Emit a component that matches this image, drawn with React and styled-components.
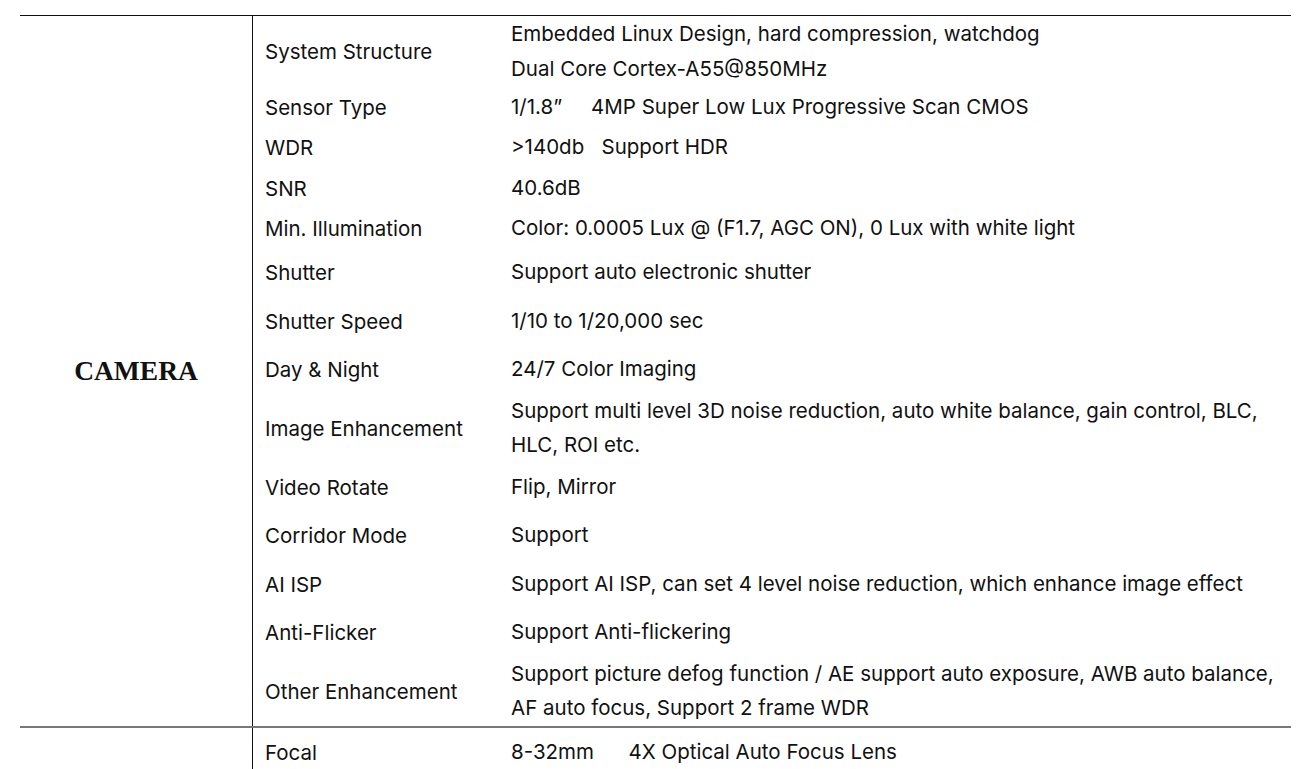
import React from "react";
import styled, { createGlobalStyle } from "styled-components";

const GlobalStyle = createGlobalStyle`
  html, body {
    margin: 0;
    padding: 0;
    background: #ffffff;
  }
  body {
    width: 1301px;
    height: 769px;
    overflow: hidden;
  }
`;

const Page = styled.div`
  padding: 15px 10px 0 20px;
  width: 1271px;
`;

const Section = styled.div`
  display: flex;
  border-top: ${(p) => (p.first ? "1px solid #111" : "2px solid #777")};
`;

const Category = styled.div`
  width: 232px;
  flex-shrink: 0;
  border-right: 1px solid #111;
  display: flex;
  align-items: center;
  justify-content: center;
  font-family: "Liberation Serif", "Times New Roman", serif;
  font-weight: bold;
  font-size: 27.5px;
  color: #111;
`;

const Rows = styled.div`
  flex: 1;
  display: flex;
  flex-direction: column;
`;

const Row = styled.div`
  display: grid;
  grid-template-columns: 246px 1fr;
  align-items: center;
  height: ${(p) => p.h}px;
  padding-left: 12px;
  font-family: "Inter", "Noto Sans", sans-serif;
  font-size: 20.5px;
  color: #111;
`;

const Label = styled.div`
  white-space: nowrap;
`;

const Value = styled.div`
  line-height: 34.5px;
  white-space: pre;
`;

const cameraRows = [
  ["System Structure", "Embedded Linux Design, hard compression, watchdog\nDual Core Cortex-A55@850MHz", 71],
  ["Sensor Type", "1/1.8\u201D     4MP Super Low Lux Progressive Scan CMOS", 40],
  ["WDR", ">140db   Support HDR", 41],
  ["SNR", "40.6dB", 40],
  ["Min. Illumination", "Color: 0.0005 Lux @ (F1.7, AGC ON), 0 Lux with white light", 40],
  ["Shutter", "Support auto electronic shutter", 49],
  ["Shutter Speed", "1/10 to 1/20,000 sec", 48],
  ["Day & Night", "24/7 Color Imaging", 48],
  ["Image Enhancement", "Support multi level 3D noise reduction, auto white balance, gain control, BLC,\nHLC, ROI etc.", 70],
  ["Video Rotate", "Flip, Mirror", 48],
  ["Corridor Mode", "Support", 49],
  ["AI ISP", "Support AI ISP, can set 4 level noise reduction, which enhance image effect", 48],
  ["Anti-Flicker", "Support Anti-flickering", 48],
  ["Other Enhancement", "Support picture defog function / AE support auto exposure, AWB auto balance,\nAF auto focus, Support 2 frame WDR", 70],
];

const lensRows = [["Focal", "8-32mm      4X Optical Auto Focus Lens", 48]];

export default function App() {
  return (
    <>
      <GlobalStyle />
      <Page>
        <Section first>
          <Category>CAMERA</Category>
          <Rows>
            {cameraRows.map(([label, value, h]) => (
              <Row key={label} h={h}>
                <Label>{label}</Label>
                <Value>{value}</Value>
              </Row>
            ))}
          </Rows>
        </Section>
        <Section>
          <Category />
          <Rows>
            {lensRows.map(([label, value, h]) => (
              <Row key={label} h={h}>
                <Label>{label}</Label>
                <Value>{value}</Value>
              </Row>
            ))}
          </Rows>
        </Section>
      </Page>
    </>
  );
}
